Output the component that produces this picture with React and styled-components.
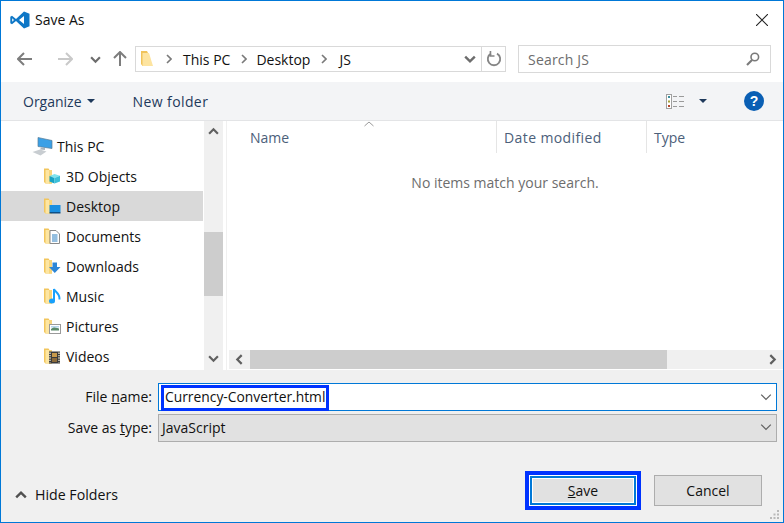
import React from 'react';
import styled, { createGlobalStyle } from 'styled-components';

const GlobalStyle = createGlobalStyle`
  html, body {
    margin: 0;
    padding: 0;
    background: #fff;
    overflow: hidden;
  }
  * { box-sizing: border-box; }
`;

const Dialog = styled.div`
  position: relative;
  width: 784px;
  height: 523px;
  display: flex;
  flex-direction: column;
  border: 1px solid #0078d7;
  background: #fff;
  font-family: 'Open Sans', 'Noto Sans', sans-serif;
  font-size: 14px;
  color: #111;
`;

const TitleBar = styled.div`
  height: 37px;
  flex: none;
  display: flex;
  align-items: center;
  padding: 0 15px 0 9px;
  gap: 5px;
`;

const TitleText = styled.span`
  flex: 1;
`;

const NavBar = styled.div`
  height: 44px;
  flex: none;
  display: flex;
  align-items: center;
  padding: 0 0 2px 16px;
`;

const NavButton = styled.div`
  width: ${(p) => p.$w}px;
  height: 20px;
  margin-left: ${(p) => p.$left || 0}px;
  flex: none;
  display: flex;
  align-items: center;
  justify-content: center;
`;

const ArrowSvg = styled.svg`
  transform: rotate(${(p) => p.$rotate}deg);
`;

const AddressBox = styled.div`
  width: 371px;
  height: 26px;
  margin-left: 7px;
  display: flex;
  align-items: center;
  border: 1px solid #d9d9d9;
  padding-left: 5px;
`;

const Crumb = styled.span`
  margin-left: ${(p) => p.$gap || 0}px;
`;

const CrumbArrow = styled.svg`
  margin-left: ${(p) => p.$gap}px;
  flex: none;
`;

const AddressEnd = styled.div`
  margin-left: auto;
  height: 100%;
  display: flex;
  align-items: center;
`;

const Refresh = styled.div`
  width: 24px;
  height: 100%;
  margin-left: 5px;
  border-left: 1px solid #d9d9d9;
  display: flex;
  align-items: center;
  justify-content: center;
`;

const SearchBox = styled.div`
  width: 253px;
  height: 28px;
  margin-left: 12px;
  display: flex;
  align-items: center;
  justify-content: space-between;
  border: 1px solid #d9d9d9;
  padding: 0 10px 0 9px;
  color: #6d6d6d;
  letter-spacing: 0.2px;
`;

const ToolBar = styled.div`
  height: 39px;
  flex: none;
  display: flex;
  align-items: center;
  padding: 0 19px 0 22px;
  background: #f3f4f6;
  border-bottom: 1px solid #e3e4e6;
  color: #1e395b;
`;

const ToolItem = styled.span`
  display: flex;
  align-items: center;
  gap: 5px;
  margin-left: ${(p) => p.$left || 0}px;
  letter-spacing: ${(p) => p.$track || 0}px;
`;

const Caret = styled.svg`
  flex: none;
  margin-left: ${(p) => p.$left || 0}px;
`;

const ViewGroup = styled.div`
  margin-left: auto;
  display: flex;
  align-items: center;
`;

const HelpSlot = styled.span`
  display: flex;
  margin-left: 37px;
`;

const Main = styled.div`
  flex: 1;
  min-height: 0;
  display: flex;
`;

const Sidebar = styled.div`
  width: 202px;
  flex: none;
  padding-top: 10px;
  overflow: hidden;
`;

const TreeRow = styled.div`
  height: 30px;
  display: flex;
  align-items: center;
  gap: ${(p) => (p.$root ? 3 : 5)}px;
  padding-left: ${(p) => (p.$root ? 31 : 43)}px;
  background: ${(p) => (p.$active ? '#d9d9d9' : 'transparent')};
`;

const VScroll = styled.div`
  width: 19px;
  margin-left: 1px;
  flex: none;
  display: flex;
  flex-direction: column;
  align-items: center;
  background: #f0f0f0;
`;

const VScrollEnd = styled.div`
  height: ${(p) => p.$h}px;
  width: 100%;
  display: flex;
  align-items: center;
  justify-content: center;
  flex: ${(p) => (p.$grow ? 1 : 'none')};
`;

const VThumb = styled.div`
  width: 100%;
  height: 64px;
  margin-top: 91px;
  background: #cdcdcd;
  flex: none;
`;

const Splitter = styled.div`
  width: 4px;
  flex: none;
  border-right: 1px solid #f0f0f0;
`;

const Content = styled.div`
  flex: 1;
  min-width: 0;
  display: flex;
  flex-direction: column;
`;

const HeaderRow = styled.div`
  height: 32px;
  flex: none;
  display: flex;
`;

const HeaderCell = styled.div`
  position: relative;
  width: ${(p) => p.$w}px;
  flex: none;
  display: flex;
  align-items: center;
  padding: 1px 0 0 ${(p) => p.$pad}px;
  color: #4c607a;
  letter-spacing: ${(p) => p.$track || 0}px;
  border-right: ${(p) => (p.$line ? '1px solid #e5e5e5' : 'none')};
`;

const SortCaret = styled.svg`
  position: absolute;
  left: 137px;
  top: 0;
`;

const EmptyMessage = styled.div`
  flex: 1;
  padding-top: 20px;
  text-align: center;
  color: #6d6d6d;
`;

const HScroll = styled.div`
  height: 19px;
  margin: 0 0 1px 2px;
  flex: none;
  display: flex;
  background: #f0f0f0;
`;

const HScrollButton = styled.div`
  width: 21px;
  flex: none;
  display: flex;
  align-items: center;
  justify-content: center;
`;

const HThumb = styled.div`
  width: 417px;
  background: #cdcdcd;
  flex: none;
`;

const HSpacer = styled.div`
  flex: 1;
`;

const BottomPanel = styled.div`
  height: 152px;
  flex: none;
  background: #f0f0f0;
  padding-top: 13px;
  display: flex;
  flex-direction: column;
`;

const FormGrid = styled.div`
  display: grid;
  grid-template-columns: 151px 619px;
  grid-auto-rows: 28px;
  column-gap: 6px;
  row-gap: 3px;
  align-items: center;
`;

const FieldLabel = styled.label`
  text-align: right;
  padding-bottom: 2px;
`;

const ComboBox = styled.div`
  height: 28px;
  display: flex;
  align-items: center;
  justify-content: space-between;
  padding: 0 4px ${(p) => (p.$focused ? 0 : 2)}px ${(p) => (p.$focused ? 2 : 3)}px;
  border: 1px solid ${(p) => (p.$focused ? '#0078d7' : '#adadad')};
  background: ${(p) => (p.$focused ? '#fff' : '#e1e1e1')};
`;

const NameHighlight = styled.span`
  height: 26px;
  margin-bottom: -1px;
  align-self: flex-end;
  display: flex;
  align-items: center;
  padding: 0 1px 3px;
  border: 3px solid #0033ff;
  font-size: 13.85px;
  white-space: nowrap;
`;

const Footer = styled.div`
  margin-top: 29px;
  display: flex;
  align-items: center;
  padding: 0 21px 0 14px;
`;

const HideFolders = styled.div`
  display: flex;
  align-items: center;
  gap: 8px;
  padding-top: 8px;
  font-size: 14.2px;
`;

const FocusRing = styled.div`
  margin-left: auto;
  border: 4px solid #0033ff;
`;

const Button = styled.div`
  width: 108px;
  height: 31px;
  display: flex;
  align-items: center;
  justify-content: center;
  background: #e1e1e1;
  border: 1px solid ${(p) => (p.$primary ? '#fff' : '#adadad')};
  box-shadow: ${(p) => (p.$primary ? 'inset 0 0 0 2px #0078d7, inset 0 0 0 3px #fff' : 'none')};
  margin-left: ${(p) => p.$left || 0}px;
`;

const Grip = styled.svg`
  position: absolute;
  right: 3px;
  bottom: 2px;
`;

const Chevron = ({ dir = 'down', size = 10, color = '#6d6d6d', width = 2 }) => {
  const pts = {
    down: '1,3 5,7 9,3',
    up: '1,7 5,3 9,7',
    left: '7,1 3,5 7,9',
    right: '3,1 7,5 3,9',
  }[dir];
  return (
    <svg width={size} height={size} viewBox="0 0 10 10" fill="none">
      <polyline points={pts} stroke={color} strokeWidth={width} />
    </svg>
  );
};

const ArrowIcon = ({ dir, color }) => (
  <ArrowSvg $rotate={{ left: 0, right: 180, up: 90 }[dir]} width="16" height="16" viewBox="0 0 16 16" fill="none">
    <path d="M1 8H15M7 2L1 8L7 14" stroke={color} strokeWidth="2" />
  </ArrowSvg>
);

const VsCodeLogo = () => (
  <svg width="20" height="18" viewBox="0 0 20 18">
    <path
      fillRule="evenodd"
      fill="#0e77c6"
      d="M14 0.5L6 8L2 4.8L0.3 5.7V12.3L2 13.2L6 10L14 17.5L19.5 15.2V2.8ZM14 5L9 9L14 13ZM2.2 7.2L4 9L2.2 10.8Z"
    />
  </svg>
);

const CloseIcon = () => (
  <svg width="12" height="12" viewBox="0 0 12 12" fill="none">
    <path d="M0 0L12 12M12 0L0 12" stroke="#222" strokeWidth="1.1" />
  </svg>
);

const RefreshIcon = () => (
  <svg width="16" height="16" viewBox="0 0 16 16" fill="none">
    <path d="M5 2.6A6.2 6.2 0 1 0 11 2.6" stroke="#858585" strokeWidth="1.8" />
    <path d="M10.5 0V5.5H15" stroke="#858585" strokeWidth="1.8" transform="translate(-5 0) scale(0.9)" />
  </svg>
);

const SearchIcon = () => (
  <svg width="14" height="14" viewBox="0 0 14 14" fill="none">
    <circle cx="8.8" cy="5" r="3.8" stroke="#7a7a7a" strokeWidth="1.6" />
    <path d="M6 8L1 13" stroke="#7a7a7a" strokeWidth="2.2" />
  </svg>
);

const ViewIcon = () => (
  <svg width="19" height="15" viewBox="0 0 19 15">
    <rect x="0.5" y="0.5" width="5" height="14" fill="#fff" stroke="#a0a0a0" />
    <rect x="2" y="2" width="2" height="2" fill="#3a8f9e" />
    <rect x="2" y="6.5" width="2" height="2" fill="#a7a13a" />
    <rect x="2" y="11" width="2" height="2" fill="#b5482a" />
    <path d="M7 2.5H11M13 2.5H18M7 7.5H11M13 7.5H18M7 12.5H11M13 12.5H18" stroke="#9a9a9a" />
  </svg>
);

const HelpIcon = () => (
  <svg width="20" height="20" viewBox="0 0 20 20">
    <circle cx="10" cy="10" r="10" fill="#0a5fb4" />
    <text x="10" y="15" textAnchor="middle" fontFamily="Liberation Sans, sans-serif" fontWeight="700" fontSize="14" fill="#fff">?</text>
  </svg>
);

const ComputerIcon = () => (
  <svg width="22" height="19" viewBox="0 0 22 19">
    <path d="M6 0.5L20 3.5V11.5L6 9.5Z" fill="#3aa0e6" stroke="#5a7d96" strokeWidth="0.7" />
    <path d="M9 10.5L13 11V13L8 12.5Z" fill="#a8b4bd" />
    <path d="M0.5 15L8 12.5L14.5 14.5L8.5 18.5Z" fill="#c8cdd1" />
  </svg>
);

const FolderBase = () => (
  <>
    <path d="M0 1H4.5L5.5 2.5H8V16H1.5L0 14.5Z" fill="#f2c55c" />
    <path d="M1.5 2.5H7V16H1.5Z" fill="#fde6a2" />
    <path d="M5 2.5H8V16H5Z" fill="#f7d57d" />
  </>
);

// overlay drawn on top of the small folder, one per known location
const overlays = {
  objects: (
    <>
      <path d="M10.5 7L16 8.8L10.5 11L5.5 9Z" fill="#7fe3ee" />
      <path d="M5.5 9L10.5 11V16.5L5.5 14.5Z" fill="#17a3c4" />
      <path d="M10.5 11L16 8.8V14.5L10.5 16.5Z" fill="#3bbfd8" />
    </>
  ),
  desktop: (
    <>
      <rect x="5.5" y="8" width="11" height="7" fill="#1a8fe0" />
      <rect x="5.5" y="15" width="11" height="1.5" fill="#0d4f86" />
    </>
  ),
  documents: (
    <>
      <path d="M6 3.5H12L15.5 7V16.5H6Z" fill="#fff" stroke="#8a8a8a" />
      <path d="M8 8H13.5M8 10H13.5M8 12H13.5M8 14H13.5" stroke="#2b7fc0" />
    </>
  ),
  downloads: <path d="M8.5 5.5H13V10H16.5L10.8 16L5 10H8.5Z" fill="#2d86d6" />,
  music: (
    <>
      <ellipse cx="8" cy="14" rx="3" ry="2.5" fill="#18a0fb" />
      <path d="M10 14V2C11 5 16 6 15.5 12.5" fill="none" stroke="#18a0fb" strokeWidth="2" />
    </>
  ),
  pictures: (
    <>
      <rect x="5.5" y="7.5" width="11" height="9" fill="#fff" stroke="#9a9a9a" />
      <path d="M7 12L10 10L15 11.5V13.5H7Z" fill="#5a8a6a" />
      <rect x="7" y="9" width="8" height="1.5" fill="#b8d6ec" />
    </>
  ),
  videos: (
    <>
      <rect x="5" y="4.5" width="11" height="12" fill="#3b3b3b" />
      <path d="M6 5.5V15.5M15 5.5V15.5" stroke="#e8e4cc" strokeWidth="1.4" strokeDasharray="1.4 1" />
      <rect x="8" y="6" width="5" height="4" fill="#c79a4b" />
      <rect x="8" y="11" width="5" height="4" fill="#8a6a3a" />
    </>
  ),
};

const FolderIcon = ({ kind }) => (
  <svg width="17" height="18" viewBox="0 0 17 18">
    <g transform="translate(0 0.5)">
      <FolderBase />
    </g>
    {overlays[kind]}
  </svg>
);

const SmallFolder = () => (
  <svg width="12" height="17" viewBox="0 0 12 17">
    <path d="M0 0H6L7 2H8V15H1.5L0 13Z" fill="#f0c35a" />
    <path d="M1.5 2H8L12 15H1.5Z" fill="#fde4a0" />
  </svg>
);

const CrumbChevron = ({ gap }) => (
  <CrumbArrow $gap={gap} width="6" height="10" viewBox="0 0 6 10" fill="none">
    <path d="M1 1L5 5L1 9" stroke="#7a7a7a" strokeWidth="1.6" />
  </CrumbArrow>
);

const folders = [
  ['objects', '3D Objects'],
  ['desktop', 'Desktop'],
  ['documents', 'Documents'],
  ['downloads', 'Downloads'],
  ['music', 'Music'],
  ['pictures', 'Pictures'],
  ['videos', 'Videos'],
];

const App = () => (
  <Dialog>
    <GlobalStyle />
    <TitleBar>
      <VsCodeLogo />
      <TitleText>Save As</TitleText>
      <CloseIcon />
    </TitleBar>

    <NavBar>
      <NavButton $w={16}><ArrowIcon dir="left" color="#7d7d7d" /></NavButton>
      <NavButton $w={16} $left={24}><ArrowIcon dir="right" color="#c9c9c9" /></NavButton>
      <NavButton $w={12} $left={16}><Chevron size={11} /></NavButton>
      <NavButton $w={16} $left={11}><ArrowIcon dir="up" color="#7d7d7d" /></NavButton>
      <AddressBox>
        <SmallFolder />
        <CrumbChevron gap={13} />
        <Crumb $gap={11}>This PC</Crumb>
        <CrumbChevron gap={11} />
        <Crumb $gap={9}>Desktop</Crumb>
        <CrumbChevron gap={11} />
        <Crumb $gap={12}>JS</Crumb>
        <AddressEnd>
          <Chevron size={12} color="#6d6d6d" />
          <Refresh><RefreshIcon /></Refresh>
        </AddressEnd>
      </AddressBox>
      <SearchBox>
        <span>Search JS</span>
        <SearchIcon />
      </SearchBox>
    </NavBar>

    <ToolBar>
      <ToolItem>
        Organize
        <Caret width="8" height="4" viewBox="0 0 8 4"><path d="M0 0H8L4 4Z" fill="#1e395b" /></Caret>
      </ToolItem>
      <ToolItem $left={38} $track={0.4}>New folder</ToolItem>
      <ViewGroup>
        <ViewIcon />
        <Caret $left={14} width="8" height="4" viewBox="0 0 8 4"><path d="M0 0H8L4 4Z" fill="#1e395b" /></Caret>
        <HelpSlot><HelpIcon /></HelpSlot>
      </ViewGroup>
    </ToolBar>

    <Main>
      <Sidebar>
        <TreeRow $root>
          <ComputerIcon />
          This PC
        </TreeRow>
        {folders.map(([kind, label]) => (
          <TreeRow key={kind} $active={kind === 'desktop'}>
            <FolderIcon kind={kind} />
            {label}
          </TreeRow>
        ))}
      </Sidebar>
      <VScroll>
        <VScrollEnd $h={20}><Chevron dir="up" size={11} color="#606060" /></VScrollEnd>
        <VThumb />
        <VScrollEnd $grow />
        <VScrollEnd $h={24}><Chevron dir="down" size={11} color="#606060" /></VScrollEnd>
      </VScroll>
      <Splitter />
      <Content>
        <HeaderRow>
          <HeaderCell $w={270} $pad={23} $line>
            Name
            <SortCaret width="10" height="6" viewBox="0 0 10 6" fill="none">
              <path d="M0.5 5L5 1L9.5 5" stroke="#9a9a9a" />
            </SortCaret>
          </HeaderCell>
          <HeaderCell $w={150} $pad={7} $line $track={0.4}>Date modified</HeaderCell>
          <HeaderCell $w={135} $pad={7}>Type</HeaderCell>
        </HeaderRow>
        <EmptyMessage>No items match your search.</EmptyMessage>
        <HScroll>
          <HScrollButton><Chevron dir="left" size={11} color="#606060" /></HScrollButton>
          <HThumb />
          <HSpacer />
          <HScrollButton><Chevron dir="right" size={11} color="#606060" /></HScrollButton>
        </HScroll>
      </Content>
    </Main>

    <BottomPanel>
      <FormGrid>
        <FieldLabel>File <u>n</u>ame:</FieldLabel>
        <ComboBox $focused>
          <NameHighlight>Currency-Converter.html</NameHighlight>
          <Chevron size={12} color="#606060" width={1} />
        </ComboBox>
        <FieldLabel>Save as <u>t</u>ype:</FieldLabel>
        <ComboBox>
          JavaScript
          <Chevron size={12} color="#606060" width={1} />
        </ComboBox>
      </FormGrid>
      <Footer>
        <HideFolders>
          <Chevron dir="up" size={12} color="#505050" />
          Hide Folders
        </HideFolders>
        <FocusRing>
          <Button $primary><span><u>S</u>ave</span></Button>
        </FocusRing>
        <Button $left={13}>Cancel</Button>
      </Footer>
    </BottomPanel>

    <Grip width="10" height="10" viewBox="0 0 10 10" fill="#b8b8b8">
      <rect x="7" y="0" width="2" height="2" />
      <rect x="3.5" y="3.5" width="2" height="2" />
      <rect x="7" y="3.5" width="2" height="2" />
      <rect x="0" y="7" width="2" height="2" />
      <rect x="3.5" y="7" width="2" height="2" />
      <rect x="7" y="7" width="2" height="2" />
    </Grip>
  </Dialog>
);

export default App;
